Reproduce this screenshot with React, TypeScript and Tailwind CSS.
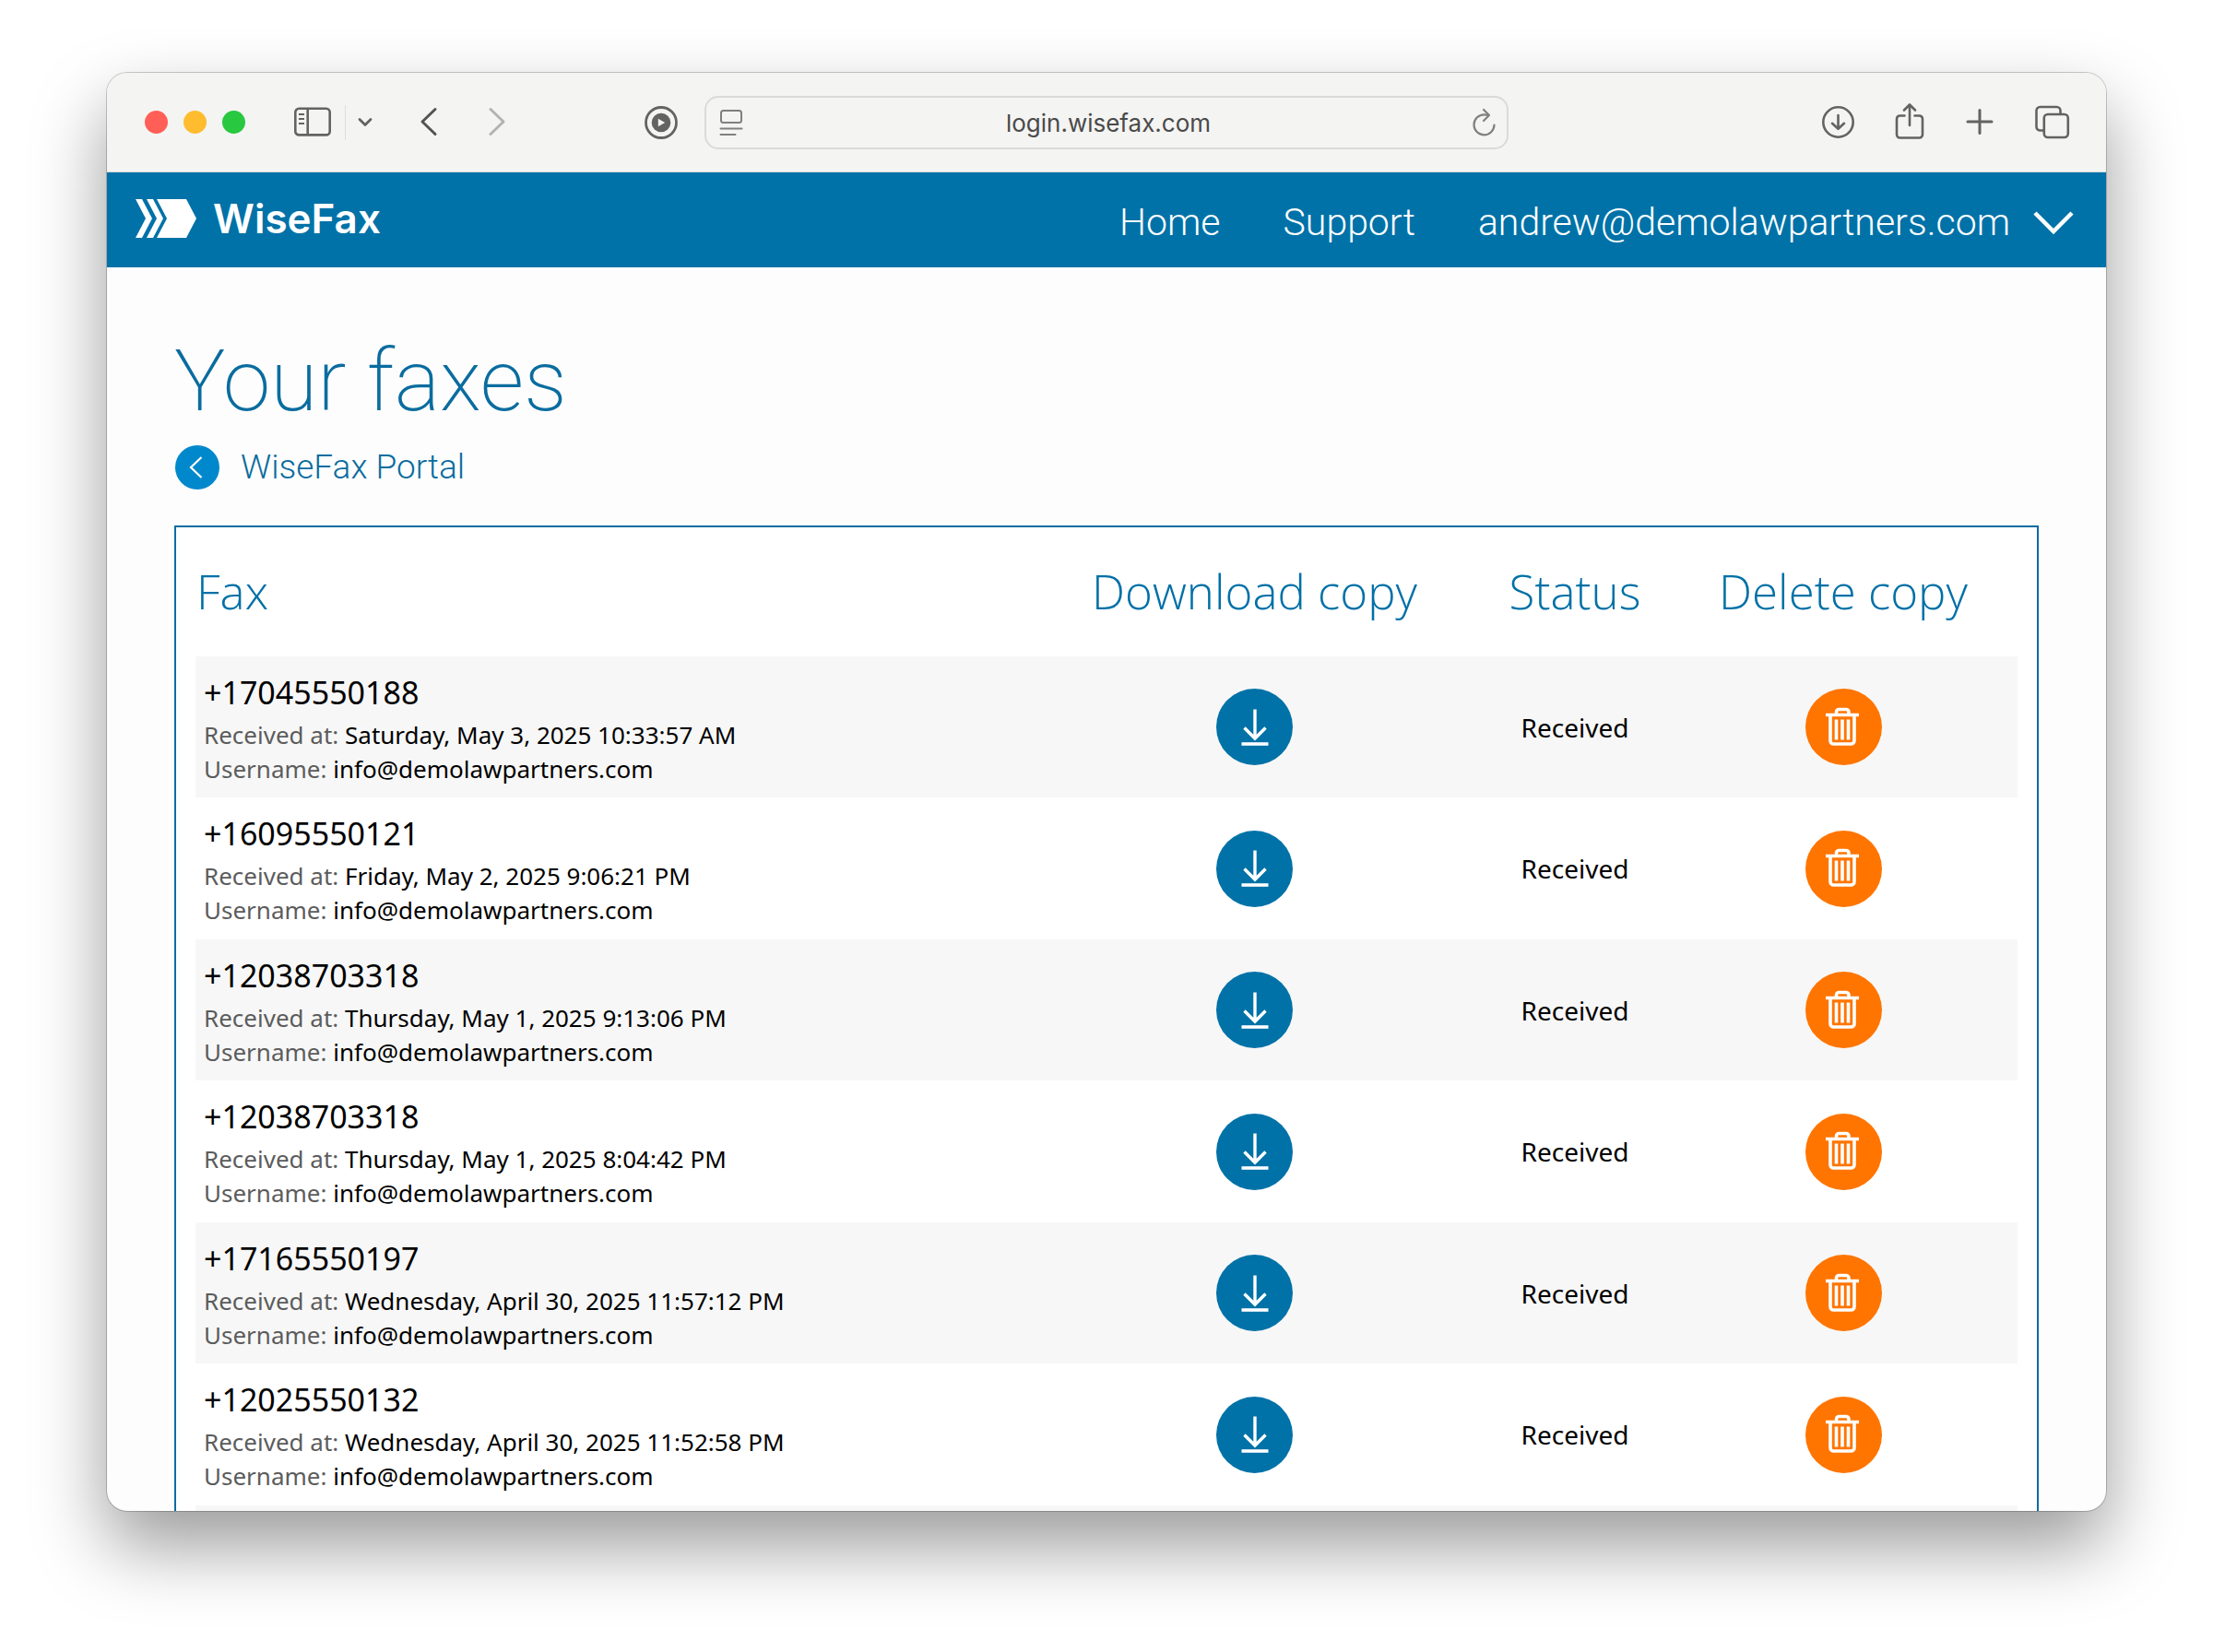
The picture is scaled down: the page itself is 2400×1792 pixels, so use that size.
import type { ReactNode } from "react";

type Fax = {
  id: number;
  phone: string;
  receivedAt: string;
  username: string;
  status: string;
};

const faxes: Fax[] = [
  { id: 1, phone: "+17045550188", receivedAt: "Saturday, May 3, 2025 10:33:57 AM", username: "info@demolawpartners.com", status: "Received" },
  { id: 2, phone: "+16095550121", receivedAt: "Friday, May 2, 2025 9:06:21 PM", username: "info@demolawpartners.com", status: "Received" },
  { id: 3, phone: "+12038703318", receivedAt: "Thursday, May 1, 2025 9:13:06 PM", username: "info@demolawpartners.com", status: "Received" },
  { id: 4, phone: "+12038703318", receivedAt: "Thursday, May 1, 2025 8:04:42 PM", username: "info@demolawpartners.com", status: "Received" },
  { id: 5, phone: "+17165550197", receivedAt: "Wednesday, April 30, 2025 11:57:12 PM", username: "info@demolawpartners.com", status: "Received" },
  { id: 6, phone: "+12025550132", receivedAt: "Wednesday, April 30, 2025 11:52:58 PM", username: "info@demolawpartners.com", status: "Received" },
];

function ToolButton({ label, className = "", children }: { label: string; className?: string; children: ReactNode }) {
  return (
    <button type="button" aria-label={label} className={`shrink-0 ${className}`}>
      {children}
    </button>
  );
}

function Toolbar() {
  return (
    <div className="grid h-[108px] shrink-0 grid-cols-[1fr_872px_1fr] items-center border-b border-[#dcdcda] bg-[#f4f4f2] text-[#636361]">
      <div className="flex items-center pr-7 pl-[41px]">
        <div className="flex gap-[17px]">
          <button type="button" aria-label="Close" className="size-[25px] rounded-full bg-[#ff5f57]" />
          <button type="button" aria-label="Minimize" className="size-[25px] rounded-full bg-[#febc2e]" />
          <button type="button" aria-label="Zoom" className="size-[25px] rounded-full bg-[#28c840]" />
        </div>
        <ToolButton label="Show sidebar" className="ml-[52px]">
          <svg width="42" height="34" viewBox="0 0 42 34" fill="none" stroke="currentColor" strokeWidth="2.6">
            <rect x="2.3" y="1.8" width="37.4" height="28.6" rx="4" />
            <path d="M15.7 1.8v28.6" />
            <path d="M6 8h6M6 13h6M6 18h6" strokeWidth="1.8" />
          </svg>
        </ToolButton>
        <span className="ml-3.5 h-[38px] w-px bg-[#dededc]" />
        <ToolButton label="Tab groups" className="ml-3">
          <svg width="18" height="14" viewBox="0 0 18 14" fill="none" stroke="currentColor" strokeWidth="2.8" strokeLinecap="round" strokeLinejoin="round">
            <path d="M3 3.5l6 6 6-6" />
          </svg>
        </ToolButton>
        <ToolButton label="Back" className="ml-[50px] text-[#535351]">
          <svg width="20" height="34" viewBox="0 0 20 34" fill="none" stroke="currentColor" strokeWidth="3" strokeLinecap="round" strokeLinejoin="round">
            <path d="M17 2.5L3 16L17 29.5" />
          </svg>
        </ToolButton>
        <ToolButton label="Forward" className="ml-[54px] text-[#b3b3b1]">
          <svg width="20" height="34" viewBox="0 0 20 34" fill="none" stroke="currentColor" strokeWidth="3" strokeLinecap="round" strokeLinejoin="round">
            <path d="M3 2.5L17 16L3 29.5" />
          </svg>
        </ToolButton>
        <ToolButton label="Media playing" className="ml-auto">
          <svg width="38" height="38" viewBox="0 0 38 38" fill="none">
            <circle cx="19" cy="19" r="16.5" stroke="currentColor" strokeWidth="2.8" />
            <circle cx="19" cy="19" r="10.3" fill="currentColor" />
            <path d="M15.8 14.8v8.4l7.4-4.2z" fill="#f4f4f2" />
          </svg>
        </ToolButton>
      </div>

      <div className="flex h-[58px] items-center rounded-[15px] border-2 border-[#dadad8] px-3 text-[#808080]">
        <ToolButton label="Page menu">
          <svg width="30" height="34" viewBox="0 0 30 34" fill="none" stroke="currentColor" strokeWidth="2">
            <rect x="4" y="4" width="22" height="13" rx="2.5" />
            <path d="M3.5 23.5h23M3.5 30h16" strokeLinecap="round" />
          </svg>
        </ToolButton>
        <input
          aria-label="Address"
          defaultValue="login.wisefax.com"
          className="min-w-0 flex-1 bg-transparent pt-0.5 text-center font-['Inter',sans-serif] text-[26px] text-[#4a4a4a] outline-none"
        />
        <ToolButton label="Reload">
          <svg width="26" height="34" viewBox="0 0 26 34" fill="none" stroke="currentColor" strokeWidth="2.2" strokeLinecap="round" strokeLinejoin="round">
            <path d="M24.5 19.5a11 11 0 1 1-11-11.2c1.7 0 3 .2 4.3 .6" />
            <path d="M13 3l6 6-6 6" />
          </svg>
        </ToolButton>
      </div>

      <div className="flex items-center justify-end pr-[38px]">
        <ToolButton label="Downloads">
          <svg width="38" height="38" viewBox="0 0 38 38" fill="none" stroke="currentColor" strokeWidth="2.6" strokeLinecap="round" strokeLinejoin="round">
            <circle cx="19.5" cy="18.5" r="16.2" />
            <path d="M19.5 11v14.5M13 19.8l6.5 6 6.5-6" />
          </svg>
        </ToolButton>
        <ToolButton label="Share" className="ml-[42px]">
          <svg width="34" height="42" viewBox="0 0 34 42" fill="none" stroke="currentColor" strokeWidth="2.6" strokeLinecap="round" strokeLinejoin="round">
            <path d="M11.5 13.5H6.500a3.500 3.500 0 0 0-3.500 3.500v17a3.500 3.500 0 0 0 3.500 3.500h21a3.500 3.500 0 0 0 3.500-3.500v-17a3.500 3.500 0 0 0-3.500-3.500h-5" />
            <path d="M17 24V2M11 7.500L17 1.500l6 6" />
          </svg>
        </ToolButton>
        <ToolButton label="New tab" className="ml-11">
          <svg width="30" height="30" viewBox="0 0 30 30" fill="none" stroke="currentColor" strokeWidth="3" strokeLinecap="round">
            <path d="M15 1.500v25M2 14h26" />
          </svg>
        </ToolButton>
        <ToolButton label="Tab overview" className="ml-11">
          <svg width="40" height="38" viewBox="0 0 40 38" fill="none" stroke="currentColor" strokeWidth="2.6" strokeLinecap="round">
            <rect x="10.8" y="10" width="26" height="25" rx="4" />
            <path d="M10 27.500H6.500a4 4 0 0 1-4-4V6a4 4 0 0 1 4-4h18a4 4 0 0 1 4 4v3" />
          </svg>
        </ToolButton>
      </div>
    </div>
  );
}

function SiteHeader() {
  return (
    <header className="flex h-[103px] shrink-0 items-center justify-between bg-[#0072a8] pr-[34px] pl-[31px] text-white">
      <a href="#home" className="flex items-center gap-[18px] pb-1">
        <svg width="66" height="42" viewBox="0 0 66 42" fill="#fff">
          <path d="M0 0h7l11 21L7 42H0l11-21z" />
          <path d="M12 0h7l11 21-11 21h-7l11-21z" />
          <path d="M23 0h32l11 21-11 21H23l11-21z" />
        </svg>
        <span className="font-['Inter',sans-serif] text-[44px] leading-[56px] font-semibold">WiseFax</span>
      </a>
      <nav className="flex items-center gap-[68px] pt-1 font-['Roboto',sans-serif] text-[41px] leading-[56px] font-light">
        <a href="#home">Home</a>
        <a href="#support">Support</a>
        <button type="button" className="flex items-center gap-6">
          andrew@demolawpartners.com
          <svg width="46" height="30" viewBox="0 0 46 30" fill="none" stroke="currentColor" strokeWidth="4.5">
            <path d="M3 5l20 20L43 5" />
          </svg>
        </button>
      </nav>
    </header>
  );
}

function DownloadIcon() {
  return (
    <svg width="44" height="48" viewBox="0 0 44 48" fill="none" stroke="currentColor" strokeWidth="3.4">
      <path d="M22 4.500v31M10.500 24.500L22 36l11.500-11.500" />
      <path d="M7.500 42h29" strokeWidth="3.6" />
    </svg>
  );
}

function TrashIcon() {
  return (
    <svg width="42" height="48" viewBox="0 0 42 48" fill="none" stroke="currentColor" strokeWidth="3.6">
      <path d="M2 10.500h36" />
      <path d="M13.500 10V7.500a3 3 0 0 1 3-3h7.500a3 3 0 0 1 3 3V10" />
      <path d="M7 11v27.500a3.500 3.500 0 0 0 3.500 3.500h19a3.500 3.500 0 0 0 3.500-3.500V11" />
      <path d="M13.500 15.500v22M20 15.500v22M26.500 15.500v22" />
    </svg>
  );
}

function FaxRow({ fax }: { fax: Fax }) {
  return (
    <tr className="odd:h-[153px] odd:bg-[#f7f7f7] even:h-[154px]">
      <td className="pl-[9px]">
        <p className="mb-0.5 text-[34px] leading-[52px]">{fax.phone}</p>
        <p className="text-[26px] leading-[37px]">
          <span className="text-[#5c5c5c]">Received at:</span> {fax.receivedAt}
        </p>
        <p className="text-[26px] leading-[37px]">
          <span className="text-[#5c5c5c]">Username:</span> {fax.username}
        </p>
      </td>
      <td>
        <button
          type="button"
          aria-label={`Download fax ${fax.phone}`}
          className="mx-auto flex size-[83px] items-center justify-center rounded-full bg-[#0072a8] text-white"
        >
          <DownloadIcon />
        </button>
      </td>
      <td className="text-center text-[28px]">{fax.status}</td>
      <td>
        <button
          type="button"
          aria-label={`Delete fax ${fax.phone}`}
          className="mx-auto flex size-[83px] items-center justify-center rounded-full bg-[#ff7500] text-white"
        >
          <TrashIcon />
        </button>
      </td>
    </tr>
  );
}

export default function App() {
  return (
    <div className="flex h-screen flex-col bg-white px-[116px] pt-[79px] pb-[153px]">
      <div className="flex min-h-0 flex-1 flex-col overflow-hidden rounded-[22px] bg-[#fdfdfd] shadow-[0_0_0_1px_rgba(0,0,0,0.2),0_38px_80px_rgba(0,0,0,0.4)]">
        <Toolbar />
        <SiteHeader />
        <main className="min-h-0 flex-1 overflow-hidden px-[73px] pt-[76px]">
          <h1 className="font-['Roboto',sans-serif] text-[93px] leading-24 font-extralight text-[#0a6c9f]">Your faxes</h1>
          <a href="#portal" className="mt-[21px] ml-px flex w-fit items-center gap-[23px] font-['Roboto',sans-serif] text-[37px] leading-12 font-light text-[#0a6c9f]">
            <span className="flex size-12 items-center justify-center rounded-full bg-[#0088cc]">
              <svg width="24" height="28" viewBox="0 0 24 28" fill="none" stroke="#fff" strokeWidth="2.2">
                <path d="M16.500 3L5 14l11.500 11" />
              </svg>
            </span>
            WiseFax Portal
          </a>
          <section className="mt-[39px] border-2 border-[#0a6c9f] bg-white px-[21px] pb-5">
            <table className="w-full table-fixed font-['Noto_Sans',sans-serif] text-black">
              <colgroup>
                <col />
                <col className="w-[491px]" />
                <col className="w-[204px]" />
                <col className="w-[378px]" />
              </colgroup>
              <thead>
                <tr className="h-35 font-['Open_Sans',sans-serif] text-[51px] whitespace-nowrap text-[#0070a7]">
                  <th className="pb-px pl-px text-left font-light">Fax</th>
                  <th className="pb-px font-light">Download copy</th>
                  <th className="pb-px font-light">Status</th>
                  <th className="pb-px font-light">Delete copy</th>
                </tr>
              </thead>
              <tbody>
                {faxes.map((fax) => (
                  <FaxRow key={fax.id} fax={fax} />
                ))}
                <tr className="h-[153px] bg-[#f7f7f7]">
                  <td colSpan={4} />
                </tr>
              </tbody>
            </table>
          </section>
        </main>
      </div>
    </div>
  );
}
